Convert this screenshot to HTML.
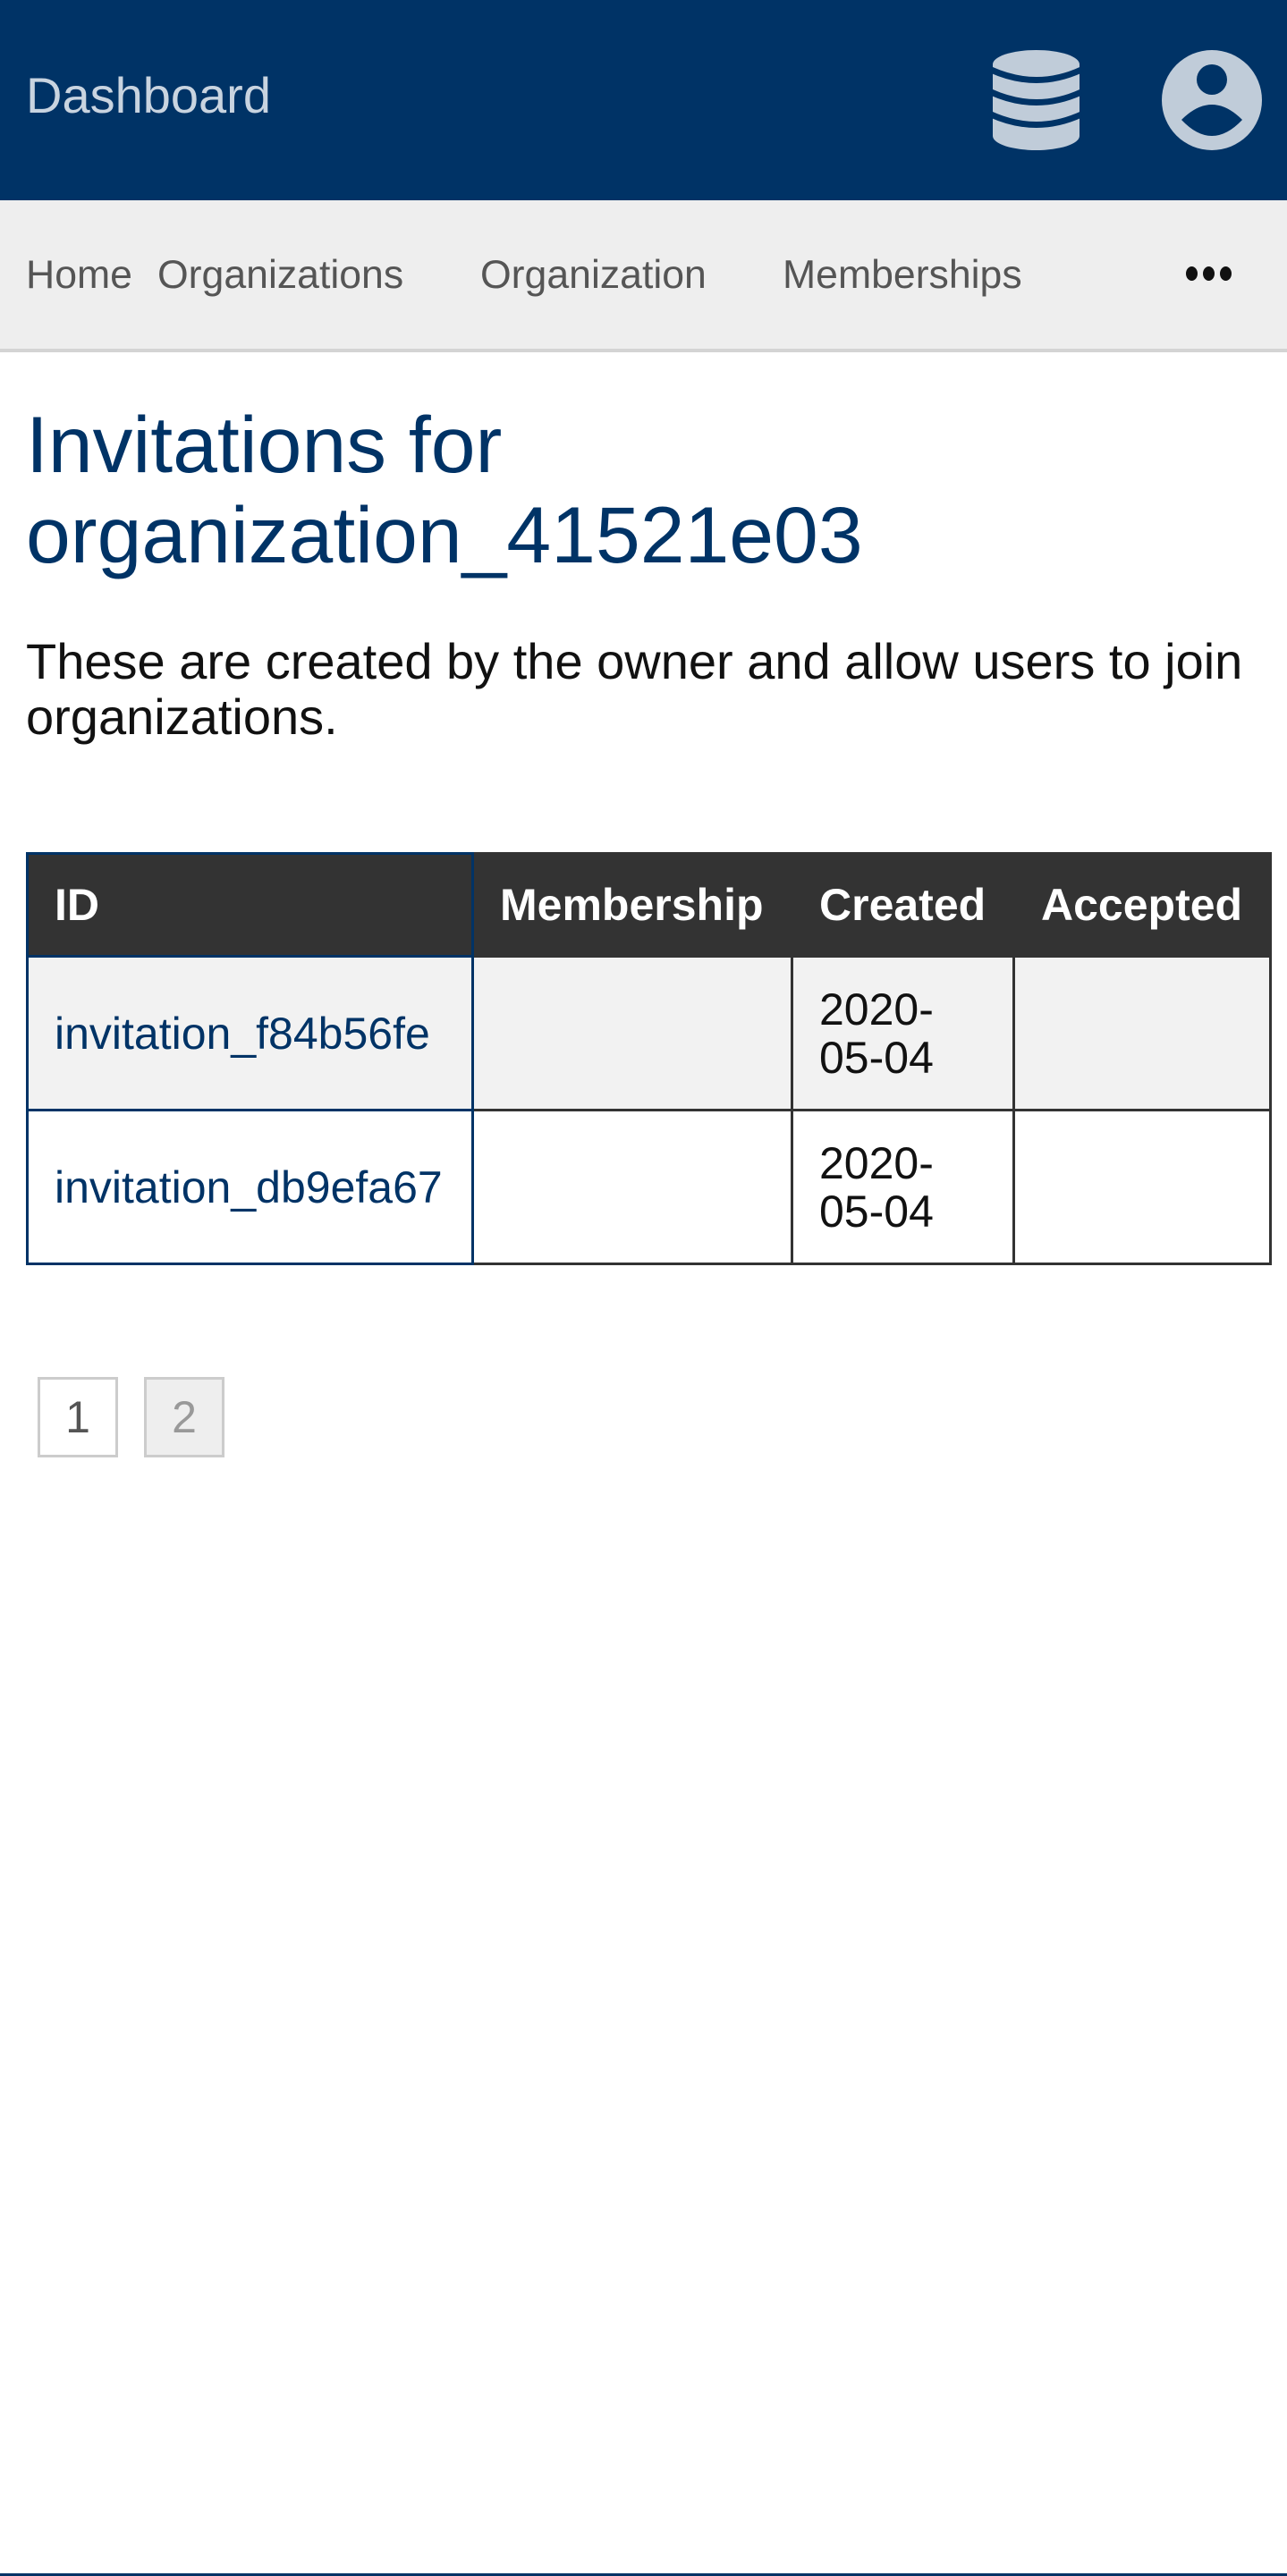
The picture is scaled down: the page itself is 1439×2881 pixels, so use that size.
<!DOCTYPE html>
<html><head><meta charset="utf-8"><style>
*{margin:0;padding:0;box-sizing:border-box}
html,body{width:1439px;height:2881px;background:#fff;font-family:"Liberation Sans",Arial,sans-serif;overflow:hidden;position:relative}
.hdr{position:absolute;left:0;top:0;width:1439px;height:224px;background:#003366}
.dash{position:absolute;left:29px;top:75px;font-size:56px;line-height:64px;color:#c9d4e0}
.nav{position:absolute;left:0;top:224px;width:1439px;height:170px;background:#eee;border-bottom:4px solid #d4d4d4}
.nav span{position:absolute;top:58px;font-size:44.6px;line-height:52px;color:#555}
.dots{position:absolute;left:1326px;top:298px}
.dots i{display:inline-block;width:13px;height:16px;border-radius:50%;background:#111;margin-right:6px}
h1{position:absolute;left:29px;top:447px;font-size:89.5px;line-height:101px;font-weight:normal;color:#003366}
p{position:absolute;left:29px;top:709px;font-size:56px;line-height:62px;color:#111;width:1400px}
table{position:absolute;left:29px;top:953px;border-collapse:collapse;font-size:50px}
td,th{border:3px solid #333;padding:0 29px;text-align:left;vertical-align:middle}
th{background:#333;color:#fff;height:115px;font-weight:bold}
td{height:172px;line-height:54px;color:#111}
td.id,th.id{border-color:#003366}
td.id{color:#003366}
tr.odd td{background:#f2f2f2}
.pg{position:absolute;top:1540px;width:90px;height:90px;border:3px solid #ccc;font-size:50px;line-height:84px;text-align:center}
.bot{position:absolute;left:0;top:2878px;width:1439px;height:3px;background:#003366}
</style></head><body>
<div class="hdr">
<div class="dash">Dashboard</div>
<svg style="position:absolute;left:0;top:0" width="1439" height="224">
<g fill="#c0ccd9">
<path d="M1110 72 A48.5 16 0 0 1 1207 72 L1207 152 A48.5 16 0 0 1 1110 152Z"/>
<circle cx="1355" cy="112" r="56"/>
</g>
<g fill="none" stroke="#003366" stroke-width="7">
<path d="M1108 78 Q1159 101 1209 78"/>
<path d="M1108 103 Q1159 126 1209 103"/>
<path d="M1108 128 Q1159 151 1209 128"/>
</g>
<g fill="#003366">
<circle cx="1355" cy="89" r="17"/>
<path d="M1321 134 Q1355 100 1389 134 Q1355 170 1321 134Z"/>
</g>
</svg>
</div>
<div class="nav">
<span style="left:29px">Home</span>
<span style="left:176px">Organizations</span>
<span style="left:537px">Organization</span>
<span style="left:875px">Memberships</span>
</div>
<div class="dots"><i></i><i></i><i></i></div>
<h1>Invitations for<br>organization_41521e03</h1>
<p>These are created by the owner and allow users to join organizations.</p>
<table>
<tr><th class="id" style="width:498px">ID</th><th style="width:357px">Membership</th><th style="width:248px">Created</th><th style="width:287px">Accepted</th></tr>
<tr class="odd"><td class="id">invitation_f84b56fe</td><td></td><td>2020-<br>05-04</td><td></td></tr>
<tr><td class="id">invitation_db9efa67</td><td></td><td>2020-<br>05-04</td><td></td></tr>
</table>
<div class="pg" style="left:42px;color:#555;background:#fff">1</div>
<div class="pg" style="left:161px;color:#999;background:#eee">2</div>
<div class="bot"></div>
</body></html>
